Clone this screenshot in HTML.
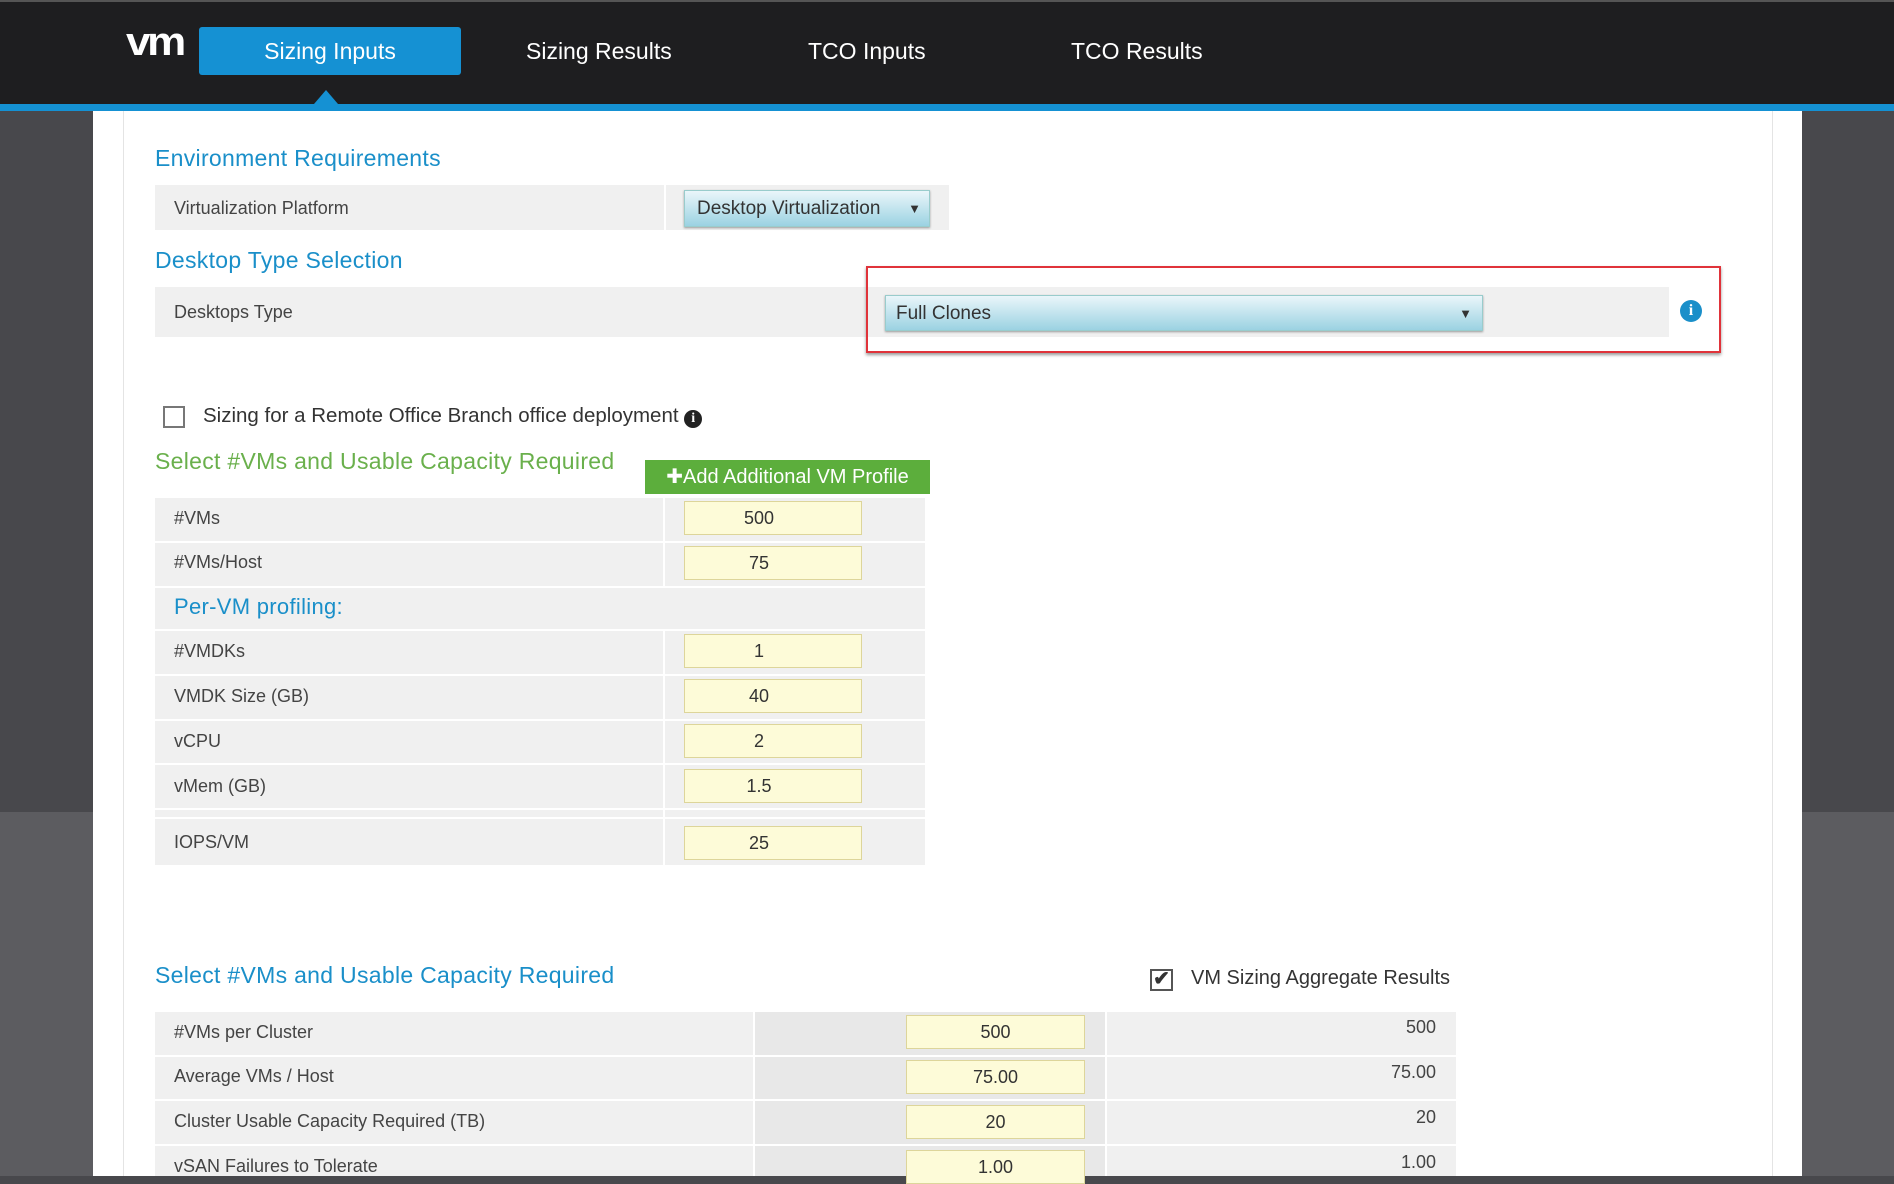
<!DOCTYPE html>
<html><head><meta charset="utf-8"><style>
*{box-sizing:border-box;margin:0;padding:0}
body{width:1894px;height:1176px;overflow:hidden;position:relative;font-family:"Liberation Sans",sans-serif;background:#48484c}
.a{position:absolute}
.nav{left:0;top:0;width:1894px;height:104px;background:#1e1e20;border-top:2px solid #555}
.blue{left:0;top:104px;width:1894px;height:7px;background:#1591d3}
.tab{color:#fff;font-size:23px;top:38px}
.panel{left:93px;top:111px;width:1709px;height:1065px;background:#fff}
.lower{left:0;top:812px;width:93px;height:364px;background:#5c5c60}
.lower2{left:1802px;top:812px;width:92px;height:364px;background:#5c5c60}
.h{color:#1a8fc9;font-size:23px;letter-spacing:0.3px}
.row{background:#f0f0f0;border-bottom:2px solid #fff}
.lbl{font-size:18px;color:#444;position:absolute;left:19px}
.inp{position:absolute;background:#fdfbd8;border:1px solid #ddd59a;font-size:18px;color:#333;text-align:center;line-height:32px;height:34px;padding-right:28px}
.sel{background:linear-gradient(#eaf6fa,#9bd2e2);border:1px solid #9cc;box-shadow:0 1px 2px #999;font-size:19px;color:#333}
</style></head><body>
<div class="a nav"></div>
<div class="a" style="left:126px;top:20px;color:#fff;font-size:40px;font-weight:bold;letter-spacing:-3px;transform:scaleX(1.1);transform-origin:left">vm</div>
<div class="a" style="left:199px;top:27px;width:262px;height:48px;background:#1591d3;border-radius:3px;color:#fff;font-size:23px;text-align:center;line-height:48px">Sizing Inputs</div>
<div class="a" style="left:314px;top:90px;width:0;height:0;border-left:12px solid transparent;border-right:12px solid transparent;border-bottom:14px solid #1591d3"></div>
<div class="a tab" style="left:526px">Sizing Results</div>
<div class="a tab" style="left:808px">TCO Inputs</div>
<div class="a tab" style="left:1071px">TCO Results</div>
<div class="a blue"></div>
<div class="a lower"></div><div class="a lower2"></div>
<div class="a panel"></div>
<div class="a" style="left:123px;top:111px;width:1px;height:1065px;background:#e4e4e4"></div>
<div class="a" style="left:1772px;top:111px;width:1px;height:1065px;background:#e4e4e4"></div>

<div class="a h" style="left:155px;top:145px">Environment Requirements</div>
<div class="a row" style="left:155px;top:185px;width:794px;height:47px"><span class="lbl" style="top:13px">Virtualization Platform</span><div class="a" style="left:509px;top:0;width:2px;height:47px;background:#fff"></div></div>
<div class="a sel" style="left:684px;top:190px;width:246px;height:37px;padding:7px 12px">Desktop Virtualization <span style="position:absolute;right:8px;font-size:13px;top:10px">▼</span></div>

<div class="a h" style="left:155px;top:247px">Desktop Type Selection</div>
<div class="a row" style="left:155px;top:287px;width:1514px;height:52px"><span class="lbl" style="top:15px">Desktops Type</span></div>
<div class="a" style="left:866px;top:266px;width:855px;height:87px;border:2px solid #e0333a;box-shadow:0 2px 3px #999"></div>
<div class="a sel" style="left:885px;top:295px;width:598px;height:36px;padding:7px 10px">Full Clones<span style="position:absolute;right:10px;font-size:13px;top:10px">▼</span></div>
<div class="a" style="left:1680px;top:300px;width:22px;height:22px;border-radius:50%;background:#1a8fc9;color:#fff;font-weight:bold;font-size:16px;text-align:center;line-height:22px;font-family:'Liberation Serif',serif">i</div>

<div class="a" style="left:163px;top:406px;width:22px;height:22px;border:2px solid #777;background:#fff"></div>
<div class="a" style="left:203px;top:404px;font-size:20.5px;color:#333">Sizing for a Remote Office Branch office deployment <span style="display:inline-block;width:18px;height:18px;border-radius:50%;background:#222;color:#fff;font-size:14px;text-align:center;line-height:18px;font-weight:bold;font-family:'Liberation Serif',serif">i</span></div>

<div class="a h" style="left:155px;top:448px;color:#6ab04c">Select #VMs and Usable Capacity Required</div>
<div class="a" style="left:645px;top:460px;width:285px;height:34px;background:#5cae3c;color:#fff;font-size:20px;line-height:34px;text-align:center">✚Add Additional VM Profile</div>

<div class="a" style="left:155px;top:498px;width:770px;height:367px;background:#f0f0f0"></div>
<div class="a" style="left:663px;top:498px;width:2px;height:89px;background:#fff"></div>
<div class="a" style="left:663px;top:630px;width:2px;height:235px;background:#fff"></div>
<div class="a" style="left:155px;top:541px;width:770px;height:2px;background:#fff"></div>
<div class="a" style="left:155px;top:586px;width:770px;height:2px;background:#fff"></div>
<div class="a" style="left:155px;top:629px;width:770px;height:2px;background:#fff"></div>
<div class="a" style="left:155px;top:674px;width:770px;height:2px;background:#fff"></div>
<div class="a" style="left:155px;top:719px;width:770px;height:2px;background:#fff"></div>
<div class="a" style="left:155px;top:763px;width:770px;height:2px;background:#fff"></div>
<div class="a" style="left:155px;top:808px;width:770px;height:2px;background:#fff"></div>
<div class="a" style="left:155px;top:817px;width:770px;height:2px;background:#fff"></div>

<span class="a lbl" style="left:174px;top:508px">#VMs</span>
<span class="a lbl" style="left:174px;top:552px">#VMs/Host</span>
<span class="a h" style="left:174px;top:594px;font-size:22px">Per-VM profiling:</span>
<span class="a lbl" style="left:174px;top:641px">#VMDKs</span>
<span class="a lbl" style="left:174px;top:686px">VMDK Size (GB)</span>
<span class="a lbl" style="left:174px;top:731px">vCPU</span>
<span class="a lbl" style="left:174px;top:776px">vMem (GB)</span>
<span class="a lbl" style="left:174px;top:832px">IOPS/VM</span>
<div class="inp" style="left:684px;top:501px;width:178px">500</div>
<div class="inp" style="left:684px;top:546px;width:178px">75</div>
<div class="inp" style="left:684px;top:634px;width:178px">1</div>
<div class="inp" style="left:684px;top:679px;width:178px">40</div>
<div class="inp" style="left:684px;top:724px;width:178px">2</div>
<div class="inp" style="left:684px;top:769px;width:178px">1.5</div>
<div class="inp" style="left:684px;top:826px;width:178px">25</div>

<div class="a h" style="left:155px;top:962px">Select #VMs and Usable Capacity Required</div>
<div class="a" style="left:1150px;top:969px;width:23px;height:22px;border:2px solid #555;background:#fff;font-size:20px;line-height:17px;text-align:center;color:#333;font-weight:bold">✔</div>
<div class="a" style="left:1191px;top:967px;font-size:20px;color:#333">VM Sizing Aggregate Results</div>

<div class="a" style="left:155px;top:1012px;width:1301px;height:164px;background:#f0f0f0"></div>
<div class="a" style="left:755px;top:1012px;width:350px;height:164px;background:#e8e8e8"></div>
<div class="a" style="left:1105px;top:1012px;width:2px;height:164px;background:#fff"></div>
<div class="a" style="left:753px;top:1012px;width:2px;height:164px;background:#fff"></div>
<div class="a" style="left:155px;top:1055px;width:1301px;height:2px;background:#fff"></div>
<div class="a" style="left:155px;top:1099px;width:1301px;height:2px;background:#fff"></div>
<div class="a" style="left:155px;top:1144px;width:1301px;height:2px;background:#fff"></div>
<span class="a lbl" style="left:174px;top:1022px">#VMs per Cluster</span>
<span class="a lbl" style="left:174px;top:1066px">Average VMs / Host</span>
<span class="a lbl" style="left:174px;top:1111px">Cluster Usable Capacity Required (TB)</span>
<span class="a lbl" style="left:174px;top:1156px">vSAN Failures to Tolerate</span>
<div class="inp" style="left:906px;top:1015px;width:179px;padding:0">500</div>
<div class="inp" style="left:906px;top:1060px;width:179px;padding:0">75.00</div>
<div class="inp" style="left:906px;top:1105px;width:179px;padding:0">20</div>
<div class="inp" style="left:906px;top:1150px;width:179px;padding:0">1.00</div>
<span class="a lbl" style="left:auto;right:458px;top:1017px">500</span>
<span class="a lbl" style="left:auto;right:458px;top:1062px">75.00</span>
<span class="a lbl" style="left:auto;right:458px;top:1107px">20</span>
<span class="a lbl" style="left:auto;right:458px;top:1152px">1.00</span>
</body></html>
